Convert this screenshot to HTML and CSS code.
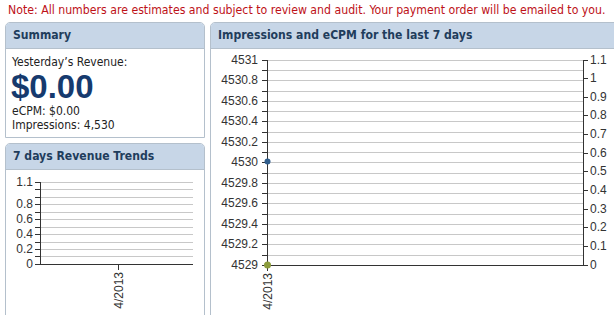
FILE: index.html
```html
<!DOCTYPE html>
<html lang="en">
<head>
  <meta charset="UTF-8" />
  <title>Earnings Summary</title>
  <link rel="stylesheet" href="styles.css">
</head>
<body>
<p class="note">Note: All numbers are estimates and subject to review and audit. Your payment order will be emailed to you.</p>
<div class="layout">
  <div class="side">
    <section class="panel">
      <h2 class="panel-head">Summary</h2>
      <div class="panel-body summary">
        <div class="label">Yesterday’s Revenue:</div>
        <div class="amount">$0.00</div>
        <div class="stat">eCPM: $0.00</div>
        <div class="stat">Impressions: 4,530</div>
      </div>
    </section>
    <section class="panel trends">
      <h2 class="panel-head">7 days Revenue Trends</h2>
      <div class="panel-body tall">
        <svg class="chart" width="198" height="150" viewBox="0 0 198 150">
          <path class="grid" d="M34 12.5H187M34 19.5H187M34 27.5H187M34 34.5H187M34 42.5H187M34 49.5H187M34 57.5H187M34 64.5H187M34 72.5H187M34 79.5H187M34 86.5H187"/>
          <path class="axis" d="M34.5 12V95M34 94.5H187M29 12.5H34M29 19.5H34M29 27.5H34M29 34.5H34M29 42.5H34M29 49.5H34M29 57.5H34M29 64.5H34M29 72.5H34M29 79.5H34M29 86.5H34M29 94.5H34M112.5 95V100"/>
          <g class="ticks left">
            <text x="27" y="16">1.1</text>
            <text x="27" y="38">0.8</text>
            <text x="27" y="53">0.6</text>
            <text x="27" y="68">0.4</text>
            <text x="27" y="83">0.2</text>
            <text x="27" y="98">0</text>
          </g>
          <text class="date" transform="translate(117,102) rotate(-90)">4/2013</text>
        </svg>
      </div>
    </section>
  </div>
  <section class="panel main">
    <h2 class="panel-head">Impressions and eCPM for the last 7 days</h2>
    <div class="panel-body tall">
      <svg class="chart" width="404" height="270" viewBox="0 0 404 270">
        <path class="grid" d="M56 11.5H372M56 21.5H372M56 31.5H372M56 42.5H372M56 52.5H372M56 62.5H372M56 72.5H372M56 83.5H372M56 93.5H372M56 103.5H372M56 113.5H372M56 124.5H372M56 134.5H372M56 144.5H372M56 154.5H372M56 165.5H372M56 175.5H372M56 185.5H372M56 195.5H372M56 206.5H372"/>
        <path class="axis" d="M56.5 11V217M56 216.5H372M372.5 11V217M51 11.5H56M51 21.5H56M51 31.5H56M51 42.5H56M51 52.5H56M51 62.5H56M51 72.5H56M51 83.5H56M51 93.5H56M51 103.5H56M51 113.5H56M51 124.5H56M51 134.5H56M51 144.5H56M51 154.5H56M51 165.5H56M51 175.5H56M51 185.5H56M51 195.5H56M51 206.5H56M51 216.5H56M372 11.5H377M372 29.5H377M372 48.5H377M372 66.5H377M372 85.5H377M372 104.5H377M372 122.5H377M372 141.5H377M372 160.5H377M372 178.5H377M372 197.5H377M372 216.5H377M56.5 217V222"/>
        <g class="ticks left">
          <text x="47" y="15">4531</text>
          <text x="47" y="35">4530.8</text>
          <text x="47" y="56">4530.6</text>
          <text x="47" y="76">4530.4</text>
          <text x="47" y="97">4530.2</text>
          <text x="47" y="117">4530</text>
          <text x="47" y="138">4529.8</text>
          <text x="47" y="158">4529.6</text>
          <text x="47" y="179">4529.4</text>
          <text x="47" y="199">4529.2</text>
          <text x="47" y="220">4529</text>
        </g>
        <g class="ticks right">
          <text x="379" y="15">1.1</text>
          <text x="379" y="33">1</text>
          <text x="379" y="52">0.9</text>
          <text x="379" y="70">0.8</text>
          <text x="379" y="89">0.7</text>
          <text x="379" y="108">0.6</text>
          <text x="379" y="126">0.5</text>
          <text x="379" y="145">0.4</text>
          <text x="379" y="164">0.3</text>
          <text x="379" y="182">0.2</text>
          <text x="379" y="201">0.1</text>
          <text x="379" y="220">0</text>
        </g>
        <circle class="dot-imp" cx="56.5" cy="112.5" r="3"/>
        <circle class="dot-ecpm" cx="56.5" cy="216" r="3.5"/>
        <text class="date" transform="translate(61,224) rotate(-90)">4/2013</text>
      </svg>
    </div>
  </section>
</div>
</body>
</html>
```

FILE: styles.css
```css
* {
  box-sizing: border-box;
}
body {
  margin: 0;
  overflow: hidden;
  font-family: 'DejaVu Sans Condensed', 'DejaVu Sans', sans-serif;
  font-size: 12px;
  color: #222;
  background: #fff;
}
.note {
  margin: 0;
  height: 22px;
  padding: 3px 0 0 8px;
  font-size: 12.2px;
  color: #bd1118;
  white-space: nowrap;
}
.layout {
  display: flex;
  gap: 5px;
  padding-left: 5px;
}
.side {
  flex: 0 0 200px;
}
.panel {
  border: 1px solid #b4c0cc;
  border-radius: 5px 5px 0 0;
  background: #fff;
}
.panel-head {
  margin: 0;
  height: 26px;
  padding: 5px 0 0 7px;
  background: #c7d6e7;
  border-bottom: 1px solid #b4c0cc;
  border-radius: 4px 4px 0 0;
  color: #1f3d5c;
  font-size: 12.1px;
  font-weight: bold;
  white-space: nowrap;
}
.summary {
  height: 88px;
  padding: 6px 6px 0;
}
.summary .label {
  line-height: 14px;
}
.amount {
  margin: -1px 0 0 -1px;
  font-family: 'Liberation Sans', Arial, sans-serif;
  font-size: 33px;
  font-weight: bold;
  line-height: 37px;
  color: #163a6e;
}
.stat {
  line-height: 14px;
}
.amount + .stat {
  margin-top: -1px;
}
.trends {
  margin-top: 5px;
}
.main {
  flex: 0 0 410px;
}
.tall {
  height: 300px;
}
.chart {
  display: block;
}
.grid {
  stroke: #c8c8c8;
  stroke-width: 1;
  fill: none;
}
.axis {
  stroke: #333;
  stroke-width: 1;
  fill: none;
}
.ticks text,
.date {
  font-family: 'Liberation Sans', Arial, sans-serif;
  font-size: 12px;
  fill: #333;
}
.ticks.left text,
.date {
  text-anchor: end;
}
.dot-imp {
  fill: #2f5d8c;
}
.dot-ecpm {
  fill: #8c9c3c;
}
```
